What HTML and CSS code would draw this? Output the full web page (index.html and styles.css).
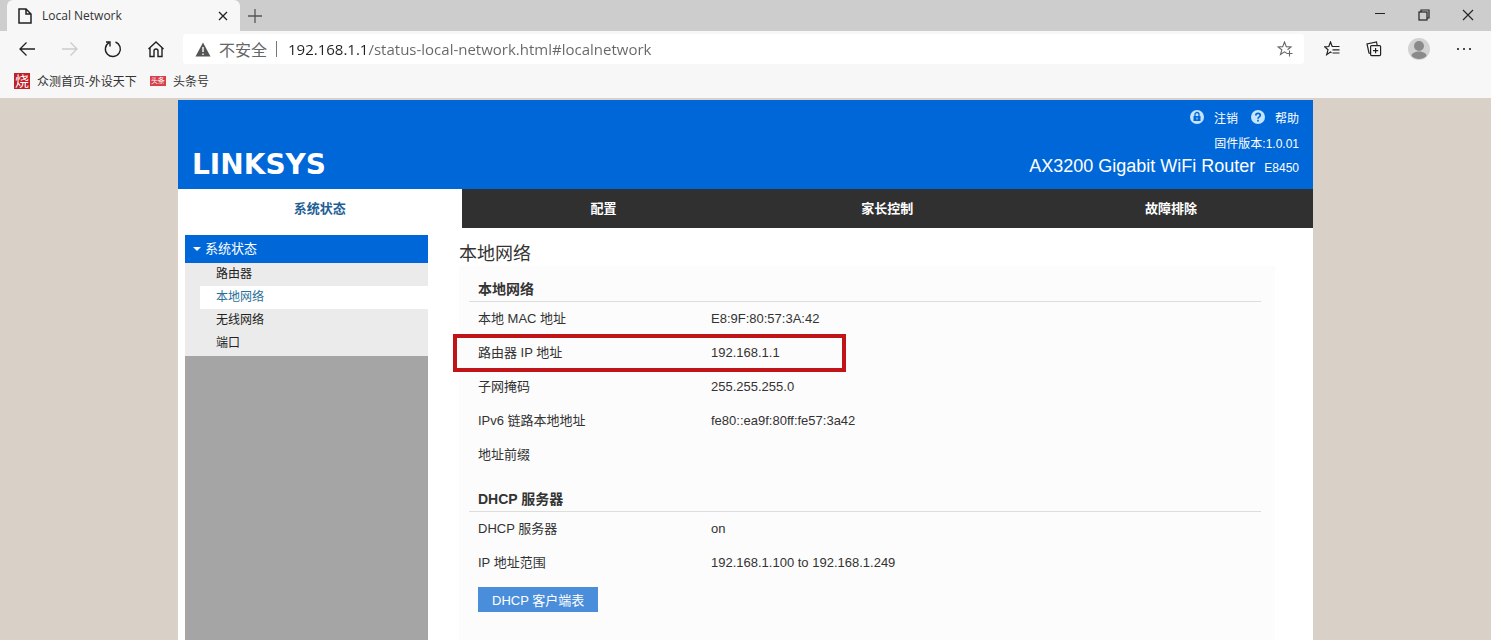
FILE: index.html
```
<!DOCTYPE html>
<html lang="zh-CN">
<head>
  <meta charset="UTF-8" />
  <meta name="viewport" content="width=device-width, initial-scale=1.0"/>
  <title>Local Network</title>
  <link rel="stylesheet" href="styles.css">
</head>
<body>
  <div class="browser">
    <div class="tab-strip">
      <div class="tab">
        <svg width="14" height="16" viewBox="0 0 14 16" fill="none" stroke="#222" stroke-width="1.5"><path d="M1 1h7l5 5v9H1zM8 1v5h5"/></svg>
        <span class="tab-title">Local Network</span>
        <button class="icon-btn" aria-label="关闭标签页">
          <svg width="10" height="10" viewBox="0 0 10 10" stroke="#222" stroke-width="1.3"><path d="M1 1l8 8M9 1l-8 8"/></svg>
        </button>
      </div>
      <button class="icon-btn new-tab" aria-label="新建标签页">
        <svg width="14" height="14" viewBox="0 0 14 14" stroke="#555" stroke-width="1.3"><path d="M7 0v14M0 7h14"/></svg>
      </button>
      <div class="window-btns">
        <button class="icon-btn" aria-label="最小化">
          <svg width="12" height="12" viewBox="0 0 12 12" stroke="#222"><path d="M1 4.500h10"/></svg>
        </button>
        <button class="icon-btn" aria-label="还原">
          <svg width="12" height="12" viewBox="0 0 12 12" fill="none" stroke="#222" stroke-width="1.2"><rect x="1" y="3" width="8" height="8"/><path d="M3 3V1h8v8H9"/></svg>
        </button>
        <button class="icon-btn" aria-label="关闭">
          <svg width="12" height="12" viewBox="0 0 12 12" stroke="#222" stroke-width="1.1"><path d="M1 1l10 10M11 1L1 11"/></svg>
        </button>
      </div>
    </div>

    <div class="toolbar">
      <div class="nav-btns">
        <button class="icon-btn" aria-label="后退">
          <svg width="18" height="18" viewBox="0 0 18 18" fill="none" stroke="#222" stroke-width="1.3"><path d="M17 9H2M8.500 2.500L2 9l6.500 6.500"/></svg>
        </button>
        <button class="icon-btn" aria-label="前进" disabled>
          <svg width="18" height="18" viewBox="0 0 18 18" fill="none" stroke="#ccc" stroke-width="1.3"><path d="M1 9h15M9.500 2.500L16 9l-6.500 6.500"/></svg>
        </button>
        <button class="icon-btn" aria-label="刷新">
          <svg width="18" height="18" viewBox="0 0 18 18" fill="none" stroke="#222" stroke-width="1.4"><path d="M11.500 2A7.500 7.500 0 1 1 5 2.600M2 2h4v4.500"/></svg>
        </button>
        <button class="icon-btn" aria-label="主页">
          <svg width="18" height="18" viewBox="0 0 18 18" fill="none" stroke="#222" stroke-width="1.4"><path d="M1.500 9L9 2l7.500 7M3 8v8.500h4V11a2 2 0 0 1 4 0v5.500h4V8"/></svg>
        </button>
      </div>
      <div class="address-bar">
        <svg width="16" height="15" viewBox="0 0 16 15"><path d="M8 0.500L15.500 14.500H.500z" fill="#555"/><path d="M8 5v5M8 11.500v1.500" stroke="#fff" stroke-width="1.4"/></svg>
        <label class="unsafe" for="url">不安全</label>
        <span class="divider"></span>
        <input class="url" id="url" type="text" value="192.168.1.1/status-local-network.html#localnetwork">
        <button class="icon-btn" aria-label="添加到收藏夹">
          <svg width="16" height="16" viewBox="0 0 16 16" fill="none" stroke="#666" stroke-width="1.1"><path d="M9.500 12L7.500 10.800l-4 2.700 1.300-4.700L1 5.900l4.700-.3L7.500 1l1.800 4.600 4.700.3-3.500 2.800M12.500 9.500v6M9.500 12.500h6"/></svg>
        </button>
      </div>
      <div class="tool-btns">
        <button class="icon-btn" aria-label="收藏夹">
          <svg width="16" height="16" viewBox="0 0 16 16" fill="none" stroke="#222" stroke-width="1.2"><path d="M9.500 5.500L8.200 5.500 6.500 1 4.800 5.500.600 5.800l3.400 3-1.300 4.900 3.800-2.600 1 .700M8.500 5.500H15.500M8.500 8.800H15.500M8.500 12H15.500"/></svg>
        </button>
        <button class="icon-btn" aria-label="集锦">
          <svg width="16" height="16" viewBox="0 0 16 16" fill="none" stroke="#222" stroke-width="1.2"><rect x="4.600" y="4.600" width="10" height="10" rx="1"/><path d="M9.600 7v5.200M7 9.600h5.200M4.500 12.500L3 12 1 3l9.500-2 .700 3.500"/></svg>
        </button>
        <button class="icon-btn" aria-label="用户">
          <svg width="22" height="22" viewBox="0 0 22 22"><circle cx="11" cy="11" r="11" fill="#d2d2d2"/><circle cx="11" cy="8" r="5" fill="#8a8a8a"/><path d="M3.500 18c0-6 15-6 15 0-4 4-11 4-15 0z" fill="#8a8a8a"/></svg>
        </button>
        <button class="icon-btn" aria-label="更多">
          <svg width="16" height="4" viewBox="0 0 16 4" fill="#222"><circle cx="2" cy="2" r="1.100"/><circle cx="8" cy="2" r="1.100"/><circle cx="14" cy="2" r="1.100"/></svg>
        </button>
      </div>
    </div>

    <div class="bookmarks">
      <a href="#"><span class="fav fav-shao">烧</span>众测首页-外设天下</a>
      <a href="#"><span class="fav fav-tou">头条</span>头条号</a>
    </div>
  </div>

  <div class="router">
    <header class="header">
      <div class="logo">LINKSYS</div>
      <div class="header-info">
        <div class="header-links">
          <a href="#">
            <svg width="14" height="14" viewBox="0 0 14 14"><circle cx="7" cy="7" r="7" fill="#c4e4ff"/><rect x="3.500" y="6" width="7" height="5" fill="#0067d9"/><path d="M5 6V4.500a2 2 0 0 1 4 0V6" fill="none" stroke="#0067d9" stroke-width="1.300"/><path d="M7 7.500v2" stroke="#c4e4ff"/></svg>
            注销
          </a>
          <a href="#">
            <svg width="14" height="14" viewBox="0 0 14 14"><circle cx="7" cy="7" r="7" fill="#c4e4ff"/><path d="M4.800 5.500C4.800 2.500 9.300 2.700 9.300 5.300 9.300 7 7 6.800 7 8.800M7 9.800v1.800" fill="none" stroke="#0067d9" stroke-width="1.700"/></svg>
            帮助
          </a>
        </div>
        <div class="firmware">固件版本:1.0.01</div>
        <div class="model">AX3200 Gigabit WiFi Router <span>E8450</span></div>
      </div>
    </header>

    <nav class="main-nav">
      <a href="#" class="active">系统状态</a>
      <a href="#">配置</a>
      <a href="#">家长控制</a>
      <a href="#">故障排除</a>
    </nav>

    <div class="main">
      <aside class="sidebar">
        <button class="menu-title">系统状态</button>
        <ul class="menu">
          <li><a href="#">路由器</a></li>
          <li><a href="#" class="active">本地网络</a></li>
          <li><a href="#">无线网络</a></li>
          <li><a href="#">端口</a></li>
        </ul>
      </aside>

      <main class="content">
        <h1>本地网络</h1>
        <div class="panel">
          <section>
            <h2>本地网络</h2>
            <table class="info">
              <tr><th scope="row">本地 MAC 地址</th><td>E8:9F:80:57:3A:42</td></tr>
              <tr class="marked"><th scope="row">路由器 IP 地址</th><td>192.168.1.1</td></tr>
              <tr><th scope="row">子网掩码</th><td>255.255.255.0</td></tr>
              <tr><th scope="row">IPv6 链路本地地址</th><td>fe80::ea9f:80ff:fe57:3a42</td></tr>
              <tr><th scope="row">地址前缀</th><td></td></tr>
            </table>
          </section>
          <section>
            <h2>DHCP 服务器</h2>
            <table class="info">
              <tr><th scope="row">DHCP 服务器</th><td>on</td></tr>
              <tr><th scope="row">IP 地址范围</th><td>192.168.1.100 to 192.168.1.249</td></tr>
            </table>
            <button class="client-btn">DHCP 客户端表</button>
          </section>
        </div>
      </main>
    </div>
  </div>
</body>
</html>
```

FILE: styles.css
```
*,
*::before {
  box-sizing: border-box;
}

body {
  margin: 0;
  min-height: 100vh;
  display: flex;
  flex-direction: column;
  background: #d9d0c8;
  font-family: "Liberation Sans", "Noto Sans CJK SC", sans-serif;
  font-size: 13px;
  color: #333;
}

a {
  color: inherit;
  text-decoration: none;
}

button {
  font: inherit;
  border: none;
  cursor: pointer;
}

svg {
  display: block;
  flex: none;
}

/* browser */
.browser {
  background: #f7f7f7;
  font-family: "Open Sans", "Noto Sans CJK SC", sans-serif;
  font-size: 12px;
}

.icon-btn {
  display: flex;
  padding: 0;
  background: none;
}

.tab-strip {
  display: flex;
  align-items: center;
  height: 31px;
  padding-left: 7px;
  background: #cdcdcd;
}

.tab {
  display: flex;
  align-items: center;
  gap: 10px;
  width: 233px;
  height: 31px;
  padding: 0 12px 0 11px;
  background: #f7f7f7;
  border-radius: 6px 6px 0 0;
}

.tab-title {
  flex: 1;
}

.new-tab {
  margin-left: 8px;
}

.window-btns {
  display: flex;
  gap: 32px;
  margin-left: auto;
  padding: 0 17px 2px 0;
}

.toolbar {
  display: flex;
  align-items: center;
  height: 36px;
  padding: 0 19px 0 18px;
}

.nav-btns {
  display: flex;
  gap: 25px;
  margin-right: 18px;
}

.address-bar {
  flex: 1;
  display: flex;
  align-items: center;
  height: 30px;
  padding: 0 11px 0 12px;
  background: #fff;
  border-radius: 3px;
  font-size: 15px;
}

.unsafe {
  margin-left: 8px;
  font-size: 16px;
  color: #666;
}

.divider {
  width: 1px;
  height: 16px;
  margin: 0 11px 0 9px;
  background: #777;
}

.url {
  flex: 1;
  min-width: 0;
  padding: 0;
  border: none;
  outline: none;
  font: inherit;
  /* host dark, path grey */
  background: linear-gradient(to right, #222 80px, #666 80px);
  -webkit-background-clip: text;
  background-clip: text;
  color: transparent;
}

.tool-btns {
  display: flex;
  align-items: center;
  gap: 26px;
  margin-left: 20px;
}

.bookmarks {
  display: flex;
  gap: 13px;
  height: 31px;
  padding: 0 14px 3px;
}

.bookmarks a {
  display: flex;
  align-items: center;
  gap: 7px;
}

.fav {
  color: #fff;
  text-align: center;
}

.fav-shao {
  width: 16px;
  font-size: 14px;
  line-height: 16px;
  background: #c02026;
}

.fav-tou {
  width: 16px;
  font-size: 7px;
  line-height: 10px;
  background: #d8404a;
}

/* router page */
.router {
  flex: 1;
  display: flex;
  flex-direction: column;
  width: 100%;
  max-width: 1135px;
  margin: 2px auto 0;
  background: #fff;
}

.header {
  display: flex;
  justify-content: space-between;
  height: 89px;
  padding: 9px 14px 8px;
  background: #0067d9;
  color: #fff;
}

.logo {
  align-self: flex-end;
  font-family: "DejaVu Sans", sans-serif;
  font-size: 28px;
  font-weight: bold;
  line-height: 32px;
}

.header-info {
  font-size: 12px;
  text-align: right;
}

.header-links {
  display: flex;
  justify-content: flex-end;
  gap: 13px;
  line-height: 20px;
}

.header-links a {
  display: flex;
  gap: 10px;
}

.header-links svg {
  margin-top: 1px;
}

.firmware {
  line-height: 30px;
}

.model {
  font-size: 18px;
  line-height: 14px;
}

.model span {
  margin-left: 4px;
  font-size: 12px;
}

.main-nav {
  display: flex;
  background: #303030;
  color: #fff;
  line-height: 39px;
}

.main-nav a {
  flex: 1;
  text-align: center;
  font-weight: bold;
}

.main-nav .active {
  background: #fff;
  color: #1f5f95;
}

.main {
  flex: 1;
  display: flex;
}

.sidebar {
  width: 243px;
  margin: 7px 31px 0 7px;
  background: #a5a5a5;
}

.menu-title {
  display: flex;
  align-items: center;
  gap: 4px;
  width: 100%;
  height: 28px;
  padding: 0 8px 3px;
  background: #0067d9;
  color: #fff;
}

.menu-title::before {
  content: "";
  margin-top: 3px;
  border: 4px solid transparent;
  border-top-color: #fff;
  border-bottom: none;
}

.menu {
  margin: 0;
  padding: 0 0 1px 15px;
  list-style: none;
  background: #ebebeb;
  font-size: 12px;
  line-height: 23px;
  color: #222;
}

.menu a {
  display: block;
  padding-left: 16px;
}

.menu .active {
  background: #fff;
  color: #2a7099;
}

.content {
  flex: 1;
  padding-right: 38px;
}

h1 {
  margin: 0;
  padding-top: 14px;
  font-size: 18px;
  font-weight: normal;
  line-height: 24px;
}

.panel {
  min-height: calc(100% - 38px);
  padding: 11px 14px 28px 10px;
  background: #fcfcfc;
}

h2 {
  margin: 0;
  padding-left: 9px;
  border-bottom: 1px solid #ddd;
  font-size: 14px;
  line-height: 24px;
}

section + section {
  margin-top: 15px;
}

.info {
  width: 100%;
  border-collapse: collapse;
  line-height: 34px;
}

.info th,
.info td {
  padding: 0;
  text-align: left;
  font-weight: normal;
}

.info th {
  width: 242px;
  padding-left: 9px;
}

.marked {
  position: relative;
}

.marked th::before {
  content: "";
  position: absolute;
  top: -2px;
  bottom: -2px;
  left: -16px;
  width: 393px;
  border: 4px solid #c01418;
}

.client-btn {
  height: 25px;
  margin: 7px 0 0 9px;
  padding: 0 14px;
  background: #4a8edb;
  color: #fff;
}
```
